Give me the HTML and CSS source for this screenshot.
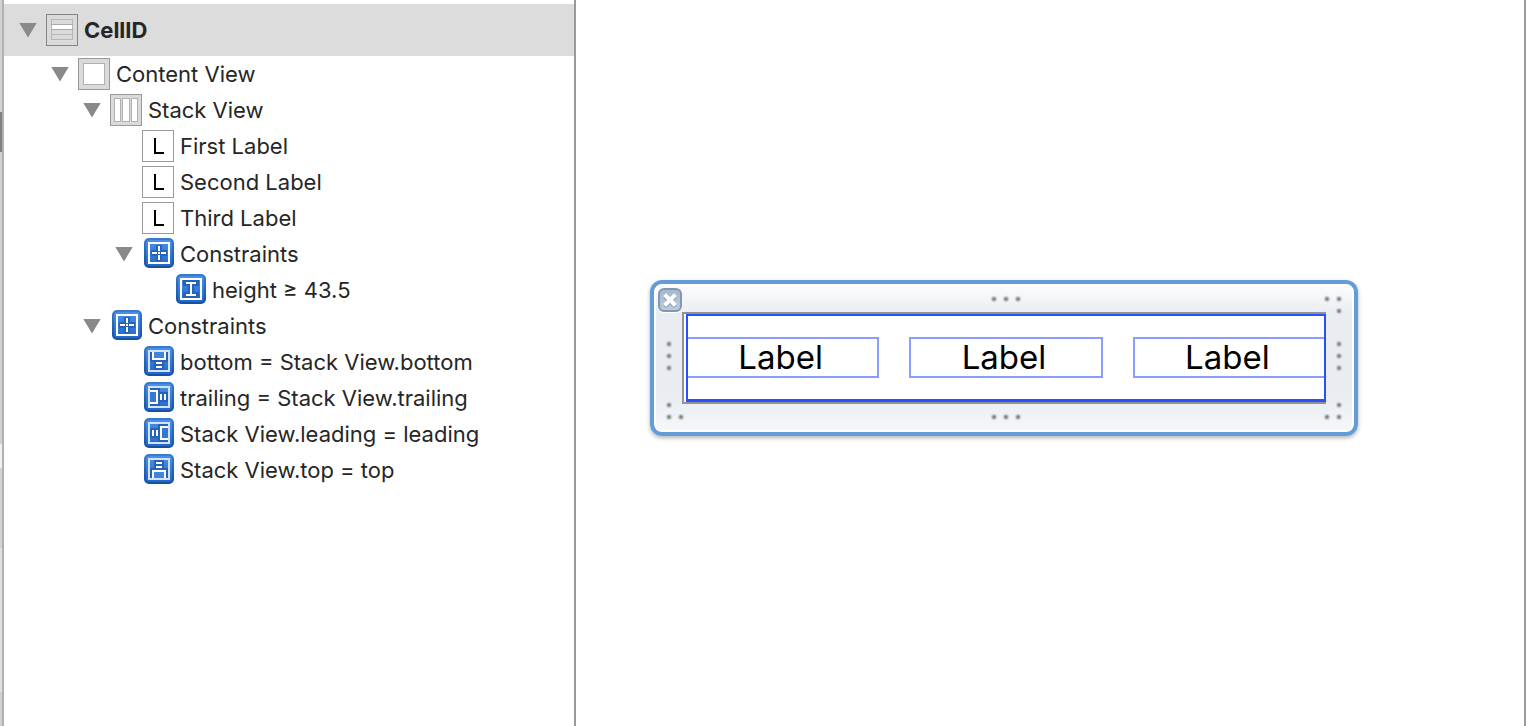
FILE: index.html
```html
<!DOCTYPE html>
<html lang="en">
<head>
<meta charset="utf-8">
<title>CellID</title>
<link rel="stylesheet" href="styles.css">
</head>
<body>
<svg class="defs" aria-hidden="true">
  <defs>
    <linearGradient id="blue" x1="0" y1="0" x2="0" y2="1">
      <stop offset="0" stop-color="#4a90ea"/><stop offset="1" stop-color="#2268c8"/>
    </linearGradient>
    <linearGradient id="edge" x1="0" y1="0" x2="0" y2="1">
      <stop offset="0" stop-color="#3a7bcb"/><stop offset="1" stop-color="#1450a2"/>
    </linearGradient>
    <symbol id="tile" viewBox="0 0 32 32">
      <rect x="2" width="30" height="30" rx="5" fill="url(#edge)"/>
      <rect x="4" y="2" width="26" height="26" rx="3" fill="url(#blue)"/>
    </symbol>
    <symbol id="constraints" viewBox="0 0 32 32">
      <use href="#tile"/>
      <path d="M14 7h6v5h5v6h-5v5h-6v-5H9v-6h5z" fill="#2463b8"/>
      <rect x="7" y="5" width="20" height="20" fill="none" stroke="#fff" stroke-width="2"/>
      <path d="M10 15h5m1 0h2m1 0h5M17 8v5m0 4v5" stroke="#fff" stroke-width="2"/>
    </symbol>
    <symbol id="height" viewBox="0 0 32 32">
      <use href="#tile"/>
      <path d="M9 6h16v6h-5v6h5v6H9v-6h5v-6H9z" fill="#2463b8"/>
      <rect x="7" y="5" width="20" height="20" fill="none" stroke="#fff" stroke-width="2"/>
      <path d="M12 9h10M12 21h10M17 9v12" stroke="#fff" stroke-width="2"/>
    </symbol>
    <symbol id="vertical" viewBox="0 0 32 32">
      <path d="M8 6h18v10h-4v8H12v-8H8z" fill="#2463b8"/>
      <path d="M12 6h10v6H12z" fill="#3f85df"/>
      <rect x="7" y="5" width="20" height="20" fill="none" stroke="#d3e2fa" stroke-width="2"/>
      <path d="M11 6v7h12V6M14 17h6M14 21h6" fill="none" stroke="#fff" stroke-width="2"/>
    </symbol>
    <symbol id="horizontal" viewBox="0 0 32 32">
      <path d="M8 6h10v4h8v10h-8v4H8z" fill="#2463b8"/>
      <path d="M8 10h6v10H8z" fill="#3578d2"/>
      <rect x="7" y="5" width="20" height="20" fill="none" stroke="#d3e2fa" stroke-width="2"/>
      <path d="M8 9h7v12H8M19 12v6M23 12v6" fill="none" stroke="#fff" stroke-width="2"/>
    </symbol>
    <symbol id="label" viewBox="0 0 32 32">
      <rect x=".5" y=".5" width="31" height="31" fill="#fff" stroke="#999"/>
      <path d="M13 8v15h9" fill="none" stroke="#000" stroke-width="2"/>
    </symbol>
    <radialGradient id="dotfill">
      <stop offset="0" stop-color="#7d7f82"/><stop offset=".3" stop-color="#8c8e91"/><stop offset=".65" stop-color="#bcbfc2" stop-opacity=".6"/><stop offset="1" stop-color="#d0d4d8" stop-opacity="0"/>
    </radialGradient>
    <circle id="dot" r="4" fill="url(#dotfill)"/>
  </defs>
</svg>

<div class="app">
  <div class="strip"></div>
  <nav class="outline" aria-label="Document outline">
    <ul class="tree">
      <li>
        <div class="row selected"><button class="toggle" aria-label="Collapse CellID"></button>
          <svg class="icon" viewBox="0 0 32 32"><rect x=".5" y=".5" width="31" height="31" fill="#dadada" stroke="#858585"/><path d="M5 5.500h22M5 20.500h22M5 25.500h22M5.500 5v21M26.500 5v21" fill="none" stroke="#b7b7b7"/><path d="M6 11h20v4H6z" fill="#fff"/><path d="M5 10.500h22M5 15.500h22" stroke="#a9a9a9"/></svg>
          <span>CellID</span></div>
        <ul>
          <li>
            <div class="row"><button class="toggle" aria-label="Collapse Content View"></button>
              <svg class="icon" viewBox="0 0 32 32"><rect x=".5" y=".5" width="31" height="31" fill="#dadada" stroke="#999"/><rect x="5.500" y="5.500" width="21" height="21" fill="#fff" stroke="#b0b0b0"/></svg>
              <span>Content View</span></div>
            <ul>
              <li>
                <div class="row"><button class="toggle" aria-label="Collapse Stack View"></button>
                  <svg class="icon" viewBox="0 0 32 32"><rect x=".5" y=".5" width="31" height="31" fill="#dadada" stroke="#999"/><g fill="#fff" stroke="#b0b0b0"><rect x="4.500" y="4.500" width="6" height="23"/><rect x="12.500" y="4.500" width="7" height="23"/><rect x="21.500" y="4.500" width="6" height="23"/></g></svg>
                  <span>Stack View</span></div>
                <ul>
                  <li><div class="row leaf"><svg class="icon"><use href="#label"/></svg><span>First Label</span></div></li>
                  <li><div class="row leaf"><svg class="icon"><use href="#label"/></svg><span>Second Label</span></div></li>
                  <li><div class="row leaf"><svg class="icon"><use href="#label"/></svg><span>Third Label</span></div></li>
                  <li>
                    <div class="row"><button class="toggle" aria-label="Collapse Constraints"></button><svg class="icon"><use href="#constraints"/></svg><span>Constraints</span></div>
                    <ul>
                      <li><div class="row leaf"><svg class="icon"><use href="#height"/></svg><span>height ≥ 43.5</span></div></li>
                    </ul>
                  </li>
                </ul>
              </li>
              <li>
                <div class="row"><button class="toggle" aria-label="Collapse Constraints"></button><svg class="icon"><use href="#constraints"/></svg><span>Constraints</span></div>
                <ul>
                  <li><div class="row leaf"><svg class="icon" viewBox="0 0 32 32"><use href="#tile"/><use href="#vertical"/></svg><span>bottom = Stack View.bottom</span></div></li>
                  <li><div class="row leaf"><svg class="icon" viewBox="0 0 32 32"><use href="#tile"/><use href="#horizontal"/></svg><span>trailing = Stack View.trailing</span></div></li>
                  <li><div class="row leaf"><svg class="icon" viewBox="0 0 32 32"><use href="#tile"/><g transform="translate(34 0) scale(-1 1)"><use href="#horizontal" width="32" height="32"/></g></svg><span>Stack View.leading = leading</span></div></li>
                  <li><div class="row leaf"><svg class="icon" viewBox="0 0 32 32"><use href="#tile"/><g transform="translate(0 30) scale(1 -1)"><use href="#vertical" width="32" height="32"/></g></svg><span>Stack View.top = top</span></div></li>
                </ul>
              </li>
            </ul>
          </li>
        </ul>
      </li>
    </ul>
  </nav>

  <main class="canvas">
    <section class="frame" aria-label="Table view cell">
      <button class="close" aria-label="Close"><svg viewBox="0 0 24 24"><path d="M8 8l8 8M16 8l-8 8" stroke="#71869f" stroke-opacity=".5" stroke-width="5" stroke-linecap="round" transform="translate(0 1)"/><path d="M8 8l8 8M16 8l-8 8" stroke="#fff" stroke-width="4" stroke-linecap="square"/></svg></button>
      <svg class="grip wide" viewBox="0 0 36 28"><use href="#dot" x="8" y="15"/><use href="#dot" x="20" y="15"/><use href="#dot" x="32" y="15"/></svg>
      <svg class="grip" viewBox="0 0 28 28"><use href="#dot" x="1" y="15"/><use href="#dot" x="13" y="15"/><use href="#dot" x="13" y="27"/></svg>
      <svg class="grip tall" viewBox="0 0 28 92"><use href="#dot" x="15" y="32"/><use href="#dot" x="15" y="44"/><use href="#dot" x="15" y="56"/></svg>
      <div class="cell">
        <div class="stack">
          <div class="label">Label</div>
          <div class="label">Label</div>
          <div class="label">Label</div>
        </div>
      </div>
      <svg class="grip tall" viewBox="0 0 28 92"><use href="#dot" x="13" y="32"/><use href="#dot" x="13" y="44"/><use href="#dot" x="13" y="56"/></svg>
      <svg class="grip" viewBox="0 0 28 28"><use href="#dot" x="15" y="1"/><use href="#dot" x="15" y="13"/><use href="#dot" x="27" y="13"/></svg>
      <svg class="grip wide" viewBox="0 0 36 28"><use href="#dot" x="8" y="13"/><use href="#dot" x="20" y="13"/><use href="#dot" x="32" y="13"/></svg>
      <svg class="grip" viewBox="0 0 28 28"><use href="#dot" x="13" y="1"/><use href="#dot" x="1" y="13"/><use href="#dot" x="13" y="13"/></svg>
    </section>
  </main>
</div>
</body>
</html>
```

FILE: styles.css
```css
* { box-sizing: border-box; }

body {
  margin: 0;
  background: #fff;
  color: #262626;
  font-family: Inter, "Liberation Sans", sans-serif;
  font-size: 22px;
}

button {
  padding: 0;
  border: 0;
  background: none;
}

.defs {
  position: absolute;
  width: 0;
  height: 0;
}

.app {
  display: flex;
  min-height: 100vh;
}

.strip {
  flex: none;
  width: 4px;
  border-right: 2px solid #b2b1af;
  background: linear-gradient(#d2d2d2 112px, #808080 112px 152px, #d0d0d0 152px 444px, #f2f2f2 444px 468px, #d2d2d2 468px 548px, #e0e0e0 548px 692px, #d0d0d0 692px);
}

.outline {
  flex: none;
  width: 572px;
  padding-top: 4px;
  border-right: 2px solid #9a9a9a;
}

.tree, .tree ul {
  margin: 0;
  padding: 0;
  list-style: none;
}

.tree ul { padding-left: 32px; }

.row {
  display: flex;
  align-items: center;
  height: 36px;
  padding-left: 15px;
  line-height: 36px;
  white-space: nowrap;
}

.row.selected {
  height: 52px;
  background: #dcdcdc;
  font-weight: 700;
}

.row.leaf { padding-left: 42px; }

.toggle {
  width: 18px;
  height: 15px;
  margin-right: 9px;
  background: #8a8a8a;
  clip-path: polygon(0 0, 100% 0, 50% 100%);
}

.icon {
  flex: none;
  width: 32px;
  height: 32px;
  margin-right: 6px;
}

.canvas {
  flex: 1;
  padding: 280px 166px 0 74px;
  border-right: 2px solid #9a9a9a;
}

.frame {
  display: grid;
  grid-template-columns: 28px 1fr 28px;
  grid-template-rows: 28px auto 28px;
  border: 4px solid #629dd9;
  border-radius: 12px;
  background: linear-gradient(#fdfdfd, #e9edf1 30px, #e9edf1 112px, #f6f7f9);
  box-shadow: inset 0 0 0 2px #fff, 0 2px 4px rgba(0, 0, 0, .3);
}

.close {
  place-self: end;
  width: 24px;
  height: 24px;
  border: 2px solid #8297b0;
  border-radius: 6px;
  background: linear-gradient(#a5b8cf, #bccbdc);
  box-shadow: 0 1px 1px #fff;
}

.close svg {
  display: block;
  width: 24px;
  height: 24px;
  margin: -2px;
  fill: none;
}

.grip {
  display: block;
  width: 28px;
  height: 28px;
  overflow: visible;
}

.grip.wide {
  width: 36px;
  justify-self: center;
}

.grip.tall { height: 92px; }

.cell {
  padding-left: 2px;
  border: 2px solid #929292;
  border-right: 0;
  background: #fff;
}

.stack {
  position: relative;
  display: grid;
  grid-template-columns: repeat(3, 1fr);
  align-items: center;
  gap: 30px;
  height: 88px;
  padding-bottom: 2px;
}

.stack::after {
  content: "";
  position: absolute;
  inset: 0;
  border: 2px solid #2850ff;
  border-bottom-width: 3px;
  pointer-events: none;
}

.label {
  padding-right: 4px;
  border: 2px solid #889dff;
  color: #000;
  font-size: 33px;
  line-height: 37px;
  text-align: center;
}
```
